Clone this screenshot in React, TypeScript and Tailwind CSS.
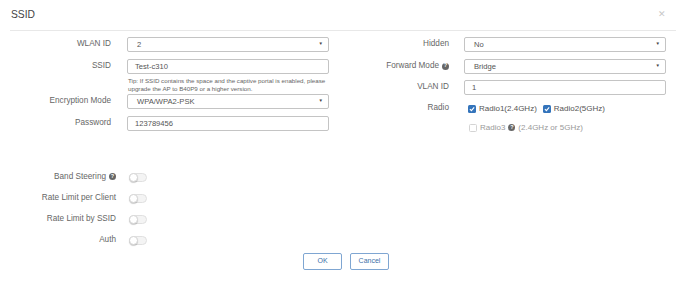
import React from "react";

const F = { fontFamily: '"Liberation Sans", Arial, sans-serif' };

function Help() {
  return (
    <span className="ml-[3px] inline-flex h-[7px] w-[7px] items-center justify-center rounded-full bg-[#666] align-middle text-[5.5px] font-bold leading-none text-white">
      ?
    </span>
  );
}

function Select({ value }: { value: string }) {
  return (
    <div className="flex h-[15px] w-[202px] items-center justify-between rounded-[2px] border border-[#c4c4c4] bg-white pl-[9px] pr-[5px] text-[7.6px] text-[#555]">
      <span>{value}</span>
      <span className="text-[4.5px] text-[#444]">▼</span>
    </div>
  );
}

function Input({ value }: { value: string }) {
  return (
    <div className="flex h-[15px] w-[202px] items-center rounded-[2px] border border-[#c4c4c4] bg-white pl-[7px] text-[7.6px] text-[#555]">
      {value}
    </div>
  );
}

function Check({ on, label, help, rest }: { on: boolean; label: string; help?: boolean; rest?: string }) {
  return (
    <span className="inline-flex items-center">
      <span
        className={
          on
            ? "mr-[3px] flex h-[8px] w-[8px] items-center justify-center rounded-[1.5px] bg-[#3474bb]"
            : "mr-[3px] h-[8px] w-[8px] rounded-[1.5px] border border-[#d4d4d4] bg-white"
        }
      >
        {on && (
          <svg width="6" height="6" viewBox="0 0 8 8">
            <path d="M1.2 4.2 L3.2 6.1 L6.9 1.8" fill="none" stroke="#fff" strokeWidth="1.5" />
          </svg>
        )}
      </span>
      <span className={on ? "text-[#555]" : "text-[#999]"}>{label}</span>
      {help && <Help />}
      {rest && <span className="ml-[3px] text-[#999]">{rest}</span>}
    </span>
  );
}

function Toggle() {
  return (
    <div className="relative h-[9px] w-[18px] rounded-full border border-[#e0e0e0] bg-[#f4f4f4]">
      <div className="absolute left-[-1px] top-[-1px] h-[9px] w-[9px] rounded-full border border-[#d6d6d6] bg-white shadow-[0_1px_1px_rgba(0,0,0,0.2)]" />
    </div>
  );
}

function Label({ text, help, w }: { text: string; help?: boolean; w: string }) {
  return (
    <div className={`${w} whitespace-nowrap text-right text-[8.2px] text-[#666]`}>
      {text}
      {help && <Help />}
    </div>
  );
}

function LRow({ label, children }: { label: string; children: React.ReactNode }) {
  return (
    <div className="flex h-[15px] items-center">
      <Label text={label} w="w-[111px]" />
      <div className="ml-[16px]">{children}</div>
    </div>
  );
}

function RRow({ label, children, help }: { label: string; children: React.ReactNode; help?: boolean }) {
  return (
    <div className="flex h-[15px] items-center">
      <Label text={label} help={help} w="w-[104px]" />
      <div className="ml-[15px]">{children}</div>
    </div>
  );
}

const SWITCHES: { l: string; h?: boolean }[] = [
  { l: "Band Steering", h: true },
  { l: "Rate Limit per Client" },
  { l: "Rate Limit by SSID" },
  { l: "Auth" },
];

export default function App() {
  return (
    <div className="h-[284px] w-[689px] bg-white" style={F}>
      <div className="ml-[10px] mr-[13px] flex h-[31px] items-center justify-between border-b border-[#e8e8e8] pl-[1px] pr-[10px]">
        <span className="text-[10.3px] text-[#444]">SSID</span>
        <span className="text-[9px] text-[#c8c8c8]">✕</span>
      </div>

      <div className="flex pt-[6px]">
        <div className="w-[345px]">
          <LRow label="WLAN ID">
            <Select value="2" />
          </LRow>
          <div className="mt-[7px]">
            <LRow label="SSID">
              <Input value="Test-c310" />
            </LRow>
          </div>
          <div className="ml-[128px] h-[20px] w-[205px] pt-[3px] text-[6.2px] leading-[8px] text-[#666]">
            Tip: If SSID contains the space and the captive portal is enabled, please upgrade the AP to B40P9 or a higher version.
          </div>
          <LRow label="Encryption Mode">
            <Select value="WPA/WPA2-PSK" />
          </LRow>
          <div className="mt-[7px]">
            <LRow label="Password">
              <Input value="123789456" />
            </LRow>
          </div>
        </div>

        <div>
          <RRow label="Hidden">
            <Select value="No" />
          </RRow>
          <div className="mt-[7px]">
            <RRow label="Forward Mode" help>
              <Select value="Bridge" />
            </RRow>
          </div>
          <div className="mt-[6px]">
            <RRow label="VLAN ID">
              <Input value="1" />
            </RRow>
          </div>
          <div className="mt-[6px]">
            <RRow label="Radio">
              <div className="ml-[4px] flex gap-[6px] text-[8px]">
                <Check on label="Radio1(2.4GHz)" />
                <Check on label="Radio2(5GHz)" />
              </div>
            </RRow>
          </div>
          <div className="ml-[124px] mt-[4px] flex h-[15px] items-center text-[8px]">
            <Check on={false} label="Radio3" help rest="(2.4GHz or 5GHz)" />
          </div>
        </div>
      </div>

      <div className="mt-[34px] flex flex-col gap-[5px]">
        {SWITCHES.map((s) => (
          <div key={s.l} className="flex h-[16px] items-center">
            <Label text={s.l} help={s.h} w="w-[116px]" />
            <div className="ml-[13px]">
              <Toggle />
            </div>
          </div>
        ))}
      </div>

      <div className="mt-[5px] flex justify-center gap-[8px] pl-[3px]">
        <button className="h-[17px] w-[39px] rounded-[2px] border border-[#7fa6d2] bg-white text-[7px] text-[#3d6fa8]">
          OK
        </button>
        <button className="h-[17px] w-[39px] rounded-[2px] border border-[#7fa6d2] bg-white text-[7px] text-[#3d6fa8]">
          Cancel
        </button>
      </div>
    </div>
  );
}
